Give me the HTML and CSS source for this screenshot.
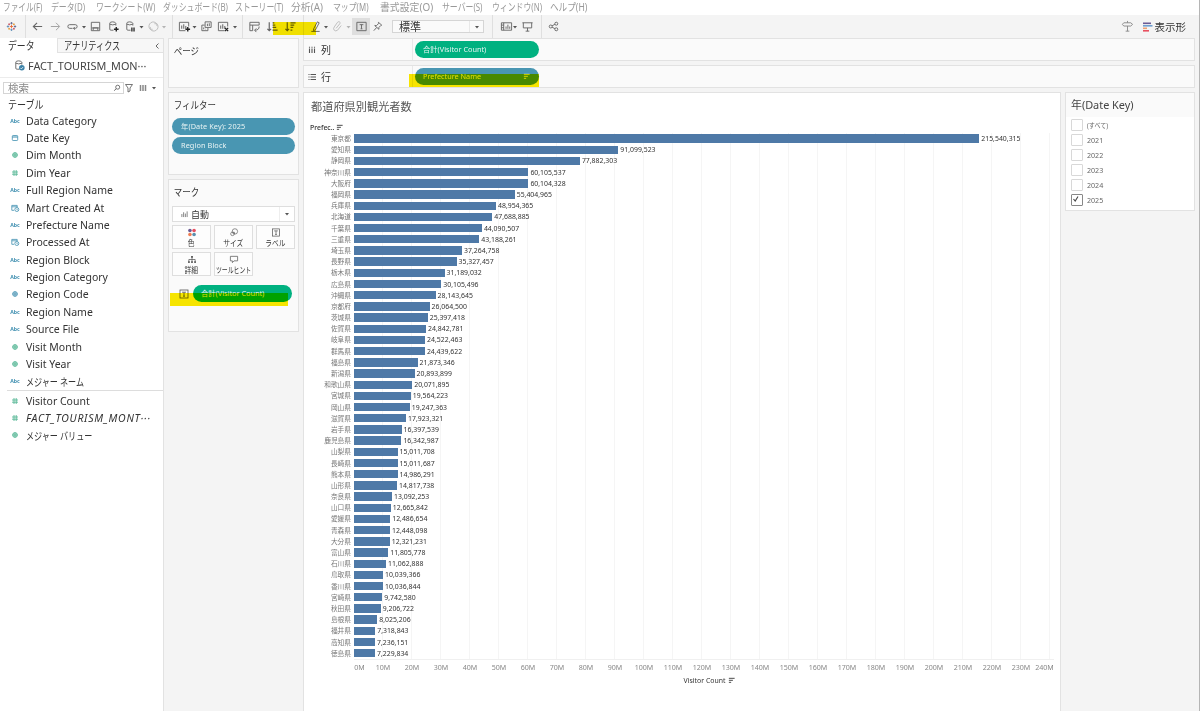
FILE: index.html
```html
<!DOCTYPE html>
<html lang="ja">
<head>
    <meta charset="UTF-8">
    <meta name="viewport" content="width=device-width, initial-scale=1.0">
    <title>都道府県別観光者数</title>
    <link rel="stylesheet" href="styles.css">
</head>
<body>

    <!-- Icons -->
    <svg class="defs">
        <symbol id="caret" viewBox="0 0 6 6"><path d="M1 2h4L3 4.4z" fill="#555"/></symbol>
        <symbol id="hash" viewBox="0 0 8 8"><path d="M3 1v6M5.2 1v6M1 3h6M1 5.2h6" stroke="currentColor" stroke-width=".8" fill="none"/></symbol>
        <symbol id="globe" viewBox="0 0 8 8"><circle cx="4" cy="4" r="2.4" fill="currentColor" fill-opacity=".4" stroke="currentColor" stroke-width=".7"/><path d="M4 1.400v5.200M1.400 4h5.200" stroke="currentColor" stroke-width=".6"/></symbol>
        <symbol id="date" viewBox="0 0 8 8"><rect x="1.3" y="1.5" width="5.4" height="5" rx=".8" fill="none" stroke="currentColor" stroke-width=".8"/><path d="M1.3 3h5.4" stroke="currentColor"/></symbol>
        <symbol id="datetime" viewBox="0 0 10 8"><path d="M4 6.3H1.8V1.4h5.4v2M1.8 2.8h5.4" fill="none" stroke="currentColor" stroke-width=".8"/><circle cx="6.8" cy="5.5" r="2" fill="none" stroke="currentColor" stroke-width=".8"/><path d="M6.8 4.5v1.2h1" stroke="currentColor" stroke-width=".6" fill="none"/></symbol>
        <symbol id="sort" viewBox="0 0 8 8"><path d="M1 1.5h6.6M1 3.8h4.6M1 6.1h2.6" stroke="currentColor" stroke-width="1" fill="none"/></symbol>
        <symbol id="label" viewBox="0 0 10 10"><rect x="1" y="1" width="8" height="8" fill="none" stroke="currentColor" stroke-width=".8"/><path d="M3 3.2h4M5 3.2v4M4 7.2h2" stroke="currentColor" stroke-width=".8"/></symbol>
        <symbol id="cylinder" viewBox="0 0 14 14"><path d="M7 11H4.5Q3 11 3 10V3.5Q3 2 6 2T9.500 3.500V6M3 4.500Q6 6 9.500 4.500" fill="none" stroke="#666"/></symbol>
        <symbol id="worksheet" viewBox="0 0 14 14"><path d="M8 11.5H1.500V2.500h10V7" fill="none" stroke="#666"/><path d="M4 9.500V6M6.200 9.500V4.500M8.400 9.500V6.500" stroke="#666" stroke-width="1.100"/></symbol>
    </svg>

    <!-- Menu bar -->
    <div class="menubar">
        <span class="m1">ファイル(F)</span>
        <span class="m2">データ(D)</span>
        <span class="m3">ワークシート(W)</span>
        <span class="m4">ダッシュボード(B)</span>
        <span class="m5">ストーリー(T)</span>
        <span class="m6">分析(A)</span>
        <span class="m7">マップ(M)</span>
        <span class="m8">書式設定(O)</span>
        <span class="m9">サーバー(S)</span>
        <span class="m10">ウィンドウ(N)</span>
        <span class="m11">ヘルプ(H)</span>
    </div>

    <!-- Toolbar -->
    <div class="toolbar">
        <span class="tool w23 logo"><svg viewBox="0 0 14 14"><g stroke-width="1.100"><path d="M7 5v4M5 7h4" stroke="#eb6532"/><path d="M7 1.300v3M5.500 2.800h3M11.500 5.500v3M10 7h3" stroke="#5a6591"/><path d="M7 9.700v3M5.500 11.200h3M2.500 5.500v3M1 7h3" stroke="#5c8db8"/><path d="M4 3v2.400M2.800 4.200h2.400M10 8.700v2.400M8.800 9.900h2.400" stroke="#c74a58"/><path d="M10 3v2.400M8.800 4.200h2.400M4 8.700v2.400M2.800 9.900h2.400" stroke="#e8962e"/></g></svg></span>
        <span class="sep w5"></span>
        <span class="tool w19"><svg viewBox="0 0 14 14"><path d="M12 7H3M6.500 3L2.500 7l4 4" stroke-width="1.200"/></svg></span>
        <span class="tool w16 faded"><svg viewBox="0 0 14 14"><path d="M2 7h9M7.500 3l4 4-4 4"/></svg></span>
        <span class="tool w18"><svg viewBox="0 0 14 14"><path d="M7 9H4Q2 9 2 7t2-2h6q2 0 2 2t-2 2H8M9.500 7.500L8 9l1.500 1.500"/></svg></span>
        <svg class="w6"><use href="#caret"/></svg>
        <span class="tool w17"><svg viewBox="0 0 14 14"><path d="M2.500 2.500h9v9h-9zM4.500 11V8.500h5V11M3 8.500h8"/></svg></span>
        <span class="tool w18"><svg viewBox="0 0 14 14"><use href="#cylinder"/><path d="M10 7.500v5M7.500 10h5" stroke="#222" stroke-width="1.500"/></svg></span>
        <span class="tool w16"><svg viewBox="0 0 14 14"><use href="#cylinder"/><path d="M8.500 8v4.500M10.800 8v4.500" stroke="#222" stroke-width="1.400"/></svg></span>
        <svg class="w7"><use href="#caret"/></svg>
        <span class="tool w16 faint"><svg viewBox="0 0 14 14"><path d="M3 9.500A4.600 4.600 0 0 1 10.500 4M11 4.500A4.600 4.600 0 0 1 3.500 10M3.500 7.500v2.500H6M10.700 6.500V4H8"/></svg></span>
        <svg class="w6 faint"><use href="#caret"/></svg>
        <span class="sep w10"></span>
        <span class="tool w14"><svg viewBox="0 0 14 14"><use href="#worksheet"/><path d="M10.500 7.500v5M8 10h5" stroke="#222" stroke-width="1.500"/></svg></span>
        <svg class="w7"><use href="#caret"/></svg>
        <span class="tool w17"><svg viewBox="0 0 14 14"><path d="M5.500 2h6.500v6H5.500zM5 5.500H2v6h6.500V8.500M8 6.500V4M10 6.500V3.500M4 10V8M6 10v-.5"/></svg></span>
        <span class="tool w17"><svg viewBox="0 0 14 14"><use href="#worksheet"/><path d="M8.500 8.500l3.500 3.500M12 8.500L8.500 12" stroke="#222" stroke-width="1.400"/></svg></span>
        <svg class="w6"><use href="#caret"/></svg>
        <span class="sep w8"></span>
        <span class="tool w16"><svg viewBox="0 0 14 14"><path d="M2 2.500h10v3H2zM2 5.500v6h3v-6M12 7q0 4-4.500 4M9 9l-2 2 2 2"/></svg></span>
        <span class="tool w20"><svg viewBox="0 0 14 14"><path d="M3.500 2.500v9M1.500 9.500l2 2 2-2M7 3h2M7 5.500h3M7 8h4M7 10.800h5.500" stroke-width="1.300"/></svg></span>
        <span class="tool w17"><svg viewBox="0 0 14 14"><path d="M3.500 2.500v9M1.500 9.500l2 2 2-2M7 3h5.500M7 5.500h4M7 8h3M7 10.800h2" stroke-width="1.300"/></svg></span>
        <span class="sep w8"></span>
        <span class="tool w16"><svg viewBox="0 0 14 14"><path d="M5 9.500L9 2l2 1-4 7.500-2.200 1zM2.500 12.300h9"/></svg></span>
        <svg class="w6"><use href="#caret"/></svg>
        <span class="tool w16 faint"><svg viewBox="0 0 14 14"><path d="M5.500 9l4-5q1-1.500-.5-2t-2 .5L3.500 7.500q-1.500 2 0 3.500t3.500 0l4-5"/></svg></span>
        <svg class="w7 faint"><use href="#caret"/></svg>
        <span class="tool w18 pressed"><svg viewBox="0 0 14 14"><path d="M2 2.500h10v9H2zM5 5h4M7 5v4.500M6 9.500h2"/></svg></span>
        <span class="tool w14"><svg viewBox="0 0 14 14"><path d="M8 2.500l3.500 3-1 .5-2 2v2L4 6h2l2-2zM6 8.200L3 11.500"/></svg></span>
        <div class="fit-select"><span>標準</span><i><svg class="w6"><use href="#caret"/></svg></i></div>
        <span class="sep w16"></span>
        <span class="tool w12"><svg viewBox="0 0 14 14"><path d="M1.500 3h11v8h-11zM4 3v8M1.500 5.500H4M1.500 8.300H4M6.500 9.500V7M8.500 9.500V5M10.500 9.500V7"/></svg></span>
        <svg class="w6"><use href="#caret"/></svg>
        <span class="tool w18"><svg viewBox="0 0 14 14"><path d="M1.500 3h11M2.500 3v5.500h9V3M7 8.500v3.500M5 12h4"/></svg></span>
        <span class="sep w10"></span>
        <span class="tool w15"><svg viewBox="0 0 14 14"><circle cx="4" cy="7" r="1.600"/><circle cx="10" cy="4" r="1.600"/><circle cx="10" cy="10" r="1.600"/><path d="M5.500 6.200l3-1.500M5.500 7.800l3 1.500"/></svg></span>
        <div class="show-me">
            <span class="tool w16"><svg viewBox="0 0 14 14"><path d="M3 3h7.500l2 1.700-2 1.800H3L1.500 4.700zM7 1v2M7 6.500V12M5 12h4" stroke="#888"/></svg></span>
            <svg class="show-icon" viewBox="0 0 10 10"><path d="M0 1.300h8" stroke="#6b5b95" stroke-width="1.600"/><path d="M0 3.800h9.500" stroke="#6f9fd0" stroke-width="1.600"/><path d="M0 6.300h4" stroke="#f0a070" stroke-width="1.600"/><path d="M0 8.800h6" stroke="#e85060" stroke-width="1.600"/></svg>
            <span class="show-label">表示形</span>
        </div>
        <div class="marker marker-tool"></div>
    </div>

    <div class="workspace">

        <!-- Data pane -->
        <div class="data-pane">
            <div class="tabs">
                <div class="tab active"><span>データ</span></div>
                <div class="tab"><span>アナリティクス</span><svg class="collapse" viewBox="0 0 6 8"><path d="M4.500 1.500L2 4l2.500 2.500" fill="none" stroke="#666"/></svg></div>
            </div>
            <div class="source">
                <svg viewBox="0 0 14 14"><use href="#cylinder"/><circle cx="9.500" cy="9.500" r="3" fill="#3c82a8"/><path d="M8 9.500l1 1.200 2-2.200" fill="none" stroke="#fff" stroke-width=".8"/></svg>
                <span>FACT_TOURISM_MON···</span>
            </div>
            <div class="search-row">
                <div class="search"><span>検索</span><svg viewBox="0 0 8 8"><circle cx="4.700" cy="3.200" r="2" fill="none" stroke="#666" stroke-width=".9"/><path d="M3.200 4.600L1.300 6.700" stroke="#666"/></svg></div>
                <svg class="funnel" viewBox="0 0 10 10"><path d="M1.500 1.500h7L6 5v3L4 9V5z" fill="none" stroke="#666" stroke-width=".9"/></svg>
                <svg class="view" viewBox="0 0 10 10"><path d="M2.500 2v6M5 2v6M7.500 2v6" stroke="#888" stroke-width="1.500"/></svg>
                <svg class="w6"><use href="#caret"/></svg>
            </div>
            <div class="tables-title"><span>テーブル</span></div>
            <div class="fields" id="dimensions"></div>
            <div class="fields measures" id="measures"></div>
        </div>

        <!-- Pages, filters and marks -->
        <div class="cards">
            <div class="card pages"><h3>ページ</h3></div>
            <div class="card filters">
                <h3>フィルター</h3>
                <div class="pill blue">年(Date Key): 2025</div>
                <div class="pill blue">Region Block</div>
            </div>
            <div class="card marks">
                <h3>マーク</h3>
                <div class="mark-type">
                    <svg class="bars" viewBox="0 0 8 8"><path d="M1 7.500V4M3 7.500V2M5 7.500V3.500M7 7.500V1" stroke="#666" stroke-width=".9"/></svg>
                    <span>自動</span>
                    <i><svg class="w6"><use href="#caret"/></svg></i>
                </div>
                <div class="mark-buttons">
                    <div class="mark-button"><svg viewBox="0 0 10 10"><circle cx="2.700" cy="2.700" r="2" fill="#6b5b95"/><circle cx="7.300" cy="2.700" r="2" fill="#e85060"/><circle cx="2.700" cy="7.300" r="2" fill="#f07c52"/><circle cx="7.300" cy="7.300" r="2" fill="#5a8fae"/></svg><span>色</span></div>
                    <div class="mark-button"><svg viewBox="0 0 10 10" fill="none" stroke="#666" stroke-width=".8"><circle cx="6" cy="3.800" r="3"/><circle cx="3.300" cy="6.500" r="2"/><path d="M3.500 4.800h2v2"/></svg><span>サイズ</span></div>
                    <div class="mark-button"><svg><use href="#label"/></svg><span>ラベル</span></div>
                    <div class="mark-button"><svg viewBox="0 0 10 10"><path d="M5 2v3M1.500 8V5h7v3M5 5v3" fill="none" stroke="#555" stroke-width=".8"/><path d="M4 1h2v2H4zM.7 7h1.800v1.800H.7zM4.100 7h1.800v1.800H4.100zM7.500 7h1.800v1.800H7.500z" fill="#555"/></svg><span>詳細</span></div>
                    <div class="mark-button tooltip"><svg viewBox="0 0 10 10"><path d="M1 1.500h8v5H5L3.200 8.500v-2H1z" fill="none" stroke="#666" stroke-width=".9"/></svg><span>ツールヒント</span></div>
                </div>
                <div class="mark-field">
                    <svg><use href="#label"/></svg>
                    <div class="pill green">合計(Visitor Count)</div>
                    <div class="marker marker-mark"></div>
                </div>
            </div>
        </div>

        <!-- Shelves and view -->
        <div class="main">
            <div class="shelf">
                <div class="shelf-name"><svg viewBox="0 0 8 8"><path d="M1.500 2.500V7M4 2.500V7M6.500 2.500V7M1.500 .7v1M4 .7v1M6.500 .7v1" stroke="#555" stroke-width="1.100"/></svg>列</div>
                <div class="pill green">合計(Visitor Count)</div>
            </div>
            <div class="shelf">
                <div class="shelf-name"><svg viewBox="0 0 8 8"><path d="M2.500 1.500H8M2.500 4H8M2.500 6.500H8M.5 1.500h1M.5 4h1M.5 6.500h1" stroke="#555" stroke-width="1.100"/></svg>行</div>
                <div class="pill blue">Prefecture Name<svg class="sort"><use href="#sort"/></svg></div>
                <div class="marker marker-row"></div>
            </div>
            <div class="view-area">
                <div class="sheet">
                    <h1>都道府県別観光者数</h1>
                    <div class="row-header">Prefec.. <svg class="sort"><use href="#sort"/></svg></div>
                    <div class="chart" id="bar-chart"></div>
                    <div class="axis" id="axis"></div>
                    <div class="axis-title">Visitor Count <svg class="sort"><use href="#sort"/></svg></div>
                </div>
                <div class="year-filter">
                    <h2>年(Date Key)</h2>
                    <ul>
                        <li><i></i><span class="all">(すべて)</span></li>
                        <li><i></i><span>2021</span></li>
                        <li><i></i><span>2022</span></li>
                        <li><i></i><span>2023</span></li>
                        <li><i></i><span>2024</span></li>
                        <li><i class="on"><svg viewBox="0 0 8 8"><path d="M1.500 4l1.700 2L6 1.500" fill="none" stroke="#444" stroke-width="1.100"/></svg></i><span>2025</span></li>
                    </ul>
                </div>
            </div>
        </div>
    </div>

    <script src="script.js"></script>
</body>
</html>
```
FILE: styles.css
```css
* {
    box-sizing: border-box;
}

body {
    margin: 0;
    height: 711px;
    overflow: hidden;
    display: flex;
    flex-direction: column;
    background: #f4f4f4;
    color: #333;
    font-family: "Noto Sans", "Noto Sans CJK JP", sans-serif;
    font-size: 11px;
    border-right: 1px solid #b5b5b5;
}

h1, h2, h3, ul {
    margin: 0;
    padding: 0;
    font-weight: normal;
}

svg {
    display: block;
    flex: none;
}

.defs {
    position: absolute;
    width: 0;
    height: 0;
}

/* Menu bar */
.menubar {
    display: flex;
    flex: none;
    height: 15px;
    padding-left: 3px;
    background: #fff;
    color: #999;
    font-size: 10.5px;
    line-height: 15px;
    white-space: nowrap;
}

.menubar span {
    flex: none;
    transform: scaleX(.75);
    transform-origin: left;
}

.m1 { width: 48px; }
.m2 { width: 45px; }
.m3 { width: 67px; }
.m4 { width: 72px; }
.m5 { width: 56px; }
.m6 { width: 42px; }
.m7 { width: 47px; }
.m8 { width: 62px; }
.m9 { width: 50px; }
.m10 { width: 58px; }
.m11 { width: 40px; }

.menubar .m1 { transform: scaleX(.73); }
.menubar .m6 { transform: scaleX(.94); }
.menubar .m8 { transform: scaleX(.94); }
.menubar .m11 { transform: scaleX(.82); }

/* Toolbar */
.toolbar {
    position: relative;
    display: flex;
    flex: none;
    align-items: center;
    height: 23px;
}

.tool {
    display: flex;
    flex: none;
    justify-content: center;
    align-items: center;
    height: 17px;
    color: #666;
}

.tool svg {
    width: 13px;
    height: 13px;
    fill: none;
    stroke: #666;
}

.tool.logo svg {
    width: 11px;
    height: 11px;
}

.faded { opacity: .6; }
.faint { opacity: .4; }

.pressed {
    background: #dedede;
}

.sep {
    flex: none;
    height: 23px;
    background: linear-gradient(#dfdfdf, #dfdfdf) center / 1px 100% no-repeat;
}

svg.w6, svg.w7 {
    height: 6px;
}

.w5 { width: 5px; }
.w6 { width: 6px; }
.w7 { width: 7px; }
.w8 { width: 8px; }
.w10 { width: 10px; }
.w12 { width: 12px; }
.w14 { width: 14px; }
.w15 { width: 15px; }
.w16 { width: 16px; }
.w17 { width: 17px; }
.w18 { width: 18px; }
.w19 { width: 19px; }
.w20 { width: 20px; }
.w23 { width: 23px; }

.fit-select {
    display: flex;
    align-items: center;
    justify-content: space-between;
    width: 92px;
    height: 13px;
    margin-left: 8px;
    padding-left: 6px;
    border: 1px solid #d5d5d5;
    background: #fafafa;
    line-height: 11px;
}

.fit-select i {
    display: flex;
    align-items: center;
    height: 11px;
    padding: 0 3px 0 4px;
    border-left: 1px solid #e8e8e8;
}

.show-me {
    display: flex;
    align-items: center;
    margin-left: auto;
    margin-right: 13px;
}

.show-icon {
    width: 10px;
    height: 10px;
    margin-left: 7px;
}

.show-label {
    margin-left: 2px;
    font-size: 10.5px;
    line-height: 16px;
}

/* Highlighter strokes */
.marker {
    position: absolute;
    background: #fbe900;
    mix-blend-mode: multiply;
}

.marker-tool {
    left: 273px;
    top: 7px;
    width: 43px;
    height: 13px;
}

.marker-row {
    left: 105px;
    top: 8px;
    width: 130px;
    height: 13px;
}

.marker-mark {
    left: 0;
    top: 8px;
    width: 118px;
    height: 13px;
}

.workspace {
    display: flex;
    flex: 1;
    min-height: 0;
}

/* Data pane */
.data-pane {
    flex: none;
    width: 164px;
    margin-right: 4px;
    background: #fff;
    border-right: 1px solid #e2e2e2;
}

.tabs {
    display: flex;
    height: 15px;
    line-height: 15px;
    font-size: 11.5px;
}

.tab {
    display: flex;
    flex: 1;
    align-items: center;
    padding-left: 6px;
    background: #f7f7f7;
    border: 1px solid #e2e2e2;
    border-right: 0;
}

.tab span {
    flex: none;
    width: 87px;
    transform: scaleX(.71);
    transform-origin: left;
    white-space: nowrap;
}

.tab.active {
    flex: none;
    width: 57px;
    padding-left: 8px;
    background: #fff;
    border: 0;
}

.tab.active span {
    width: 40px;
    transform: scaleX(.77);
}

.collapse {
    width: 6px;
    height: 8px;
    margin-left: 3px;
}

.source {
    display: flex;
    align-items: center;
    height: 25px;
    padding-left: 13px;
    border-bottom: 1px solid #ececec;
    color: #444;
    font-size: 10.85px;
    white-space: nowrap;
}

.source svg {
    width: 13px;
    height: 13px;
    margin-right: 2px;
}

.search-row {
    display: flex;
    align-items: center;
    height: 20px;
    padding-left: 3px;
}

.search {
    display: flex;
    align-items: center;
    justify-content: space-between;
    width: 121px;
    height: 12px;
    padding: 0 2px 0 4px;
    border: 1px solid #d5d5d5;
    color: #888;
    font-size: 10.5px;
    line-height: 10px;
}

.search svg {
    width: 8px;
    height: 8px;
}

.funnel {
    width: 10px;
    height: 10px;
    margin-right: 4px;
}

.view {
    width: 10px;
    height: 10px;
    margin-right: 3px;
}

.tables-title {
    height: 14px;
    padding-left: 8px;
    line-height: 13px;
}

.tables-title span {
    display: inline-block;
    transform: scaleX(.82);
    transform-origin: left;
}

.field {
    display: flex;
    align-items: center;
    height: 17.38px;
    padding-left: 10px;
    color: #333;
    font-size: 10.5px;
    white-space: nowrap;
}

.field svg {
    width: 10px;
    height: 8px;
    margin-right: 6px;
    color: #3f8fb0;
}

.field svg.green-icon {
    color: #45b08c;
}

.field .abc {
    width: 10px;
    margin-right: 6px;
    color: #3f8fb0;
    font-size: 5.2px;
    text-align: center;
    font-weight: bold;
}

.field .kana {
    transform: scaleX(.77);
    transform-origin: left;
}

.field .italic {
    font-style: italic;
    letter-spacing: .7px;
}

.measures {
    margin-left: 7px;
    padding-top: 1px;
    border-top: 1px solid #ddd;
}

.measures .field {
    padding-left: 3px;
}

/* Cards */
.cards {
    flex: none;
    width: 131px;
}

.card {
    border: 1px solid #e2e2e2;
    background: #fafafa;
    margin-bottom: 4px;
    padding: 0 3px;
}

.card h3 {
    height: 25px;
    padding-left: 2px;
    font-size: 10px;
    line-height: 24px;
    transform: scaleX(.85);
    transform-origin: left;
}

.pages { height: 50px; }
.filters { height: 83px; }
.marks { height: 153px; }

.pill {
    display: flex;
    align-items: center;
    height: 17px;
    padding: 0 9px 1px;
    border-radius: 9px;
    color: #e8f4f4;
    font-size: 7.3px;
    white-space: nowrap;
}

.pill.blue {
    background: #4996b2;
}

.pill.green {
    background: #00b180;
}

.filters .pill {
    margin-bottom: 2px;
    letter-spacing: .1px;
}

.mark-type {
    display: flex;
    align-items: center;
    height: 16px;
    margin-top: 1px;
    padding-left: 8px;
    border: 1px solid #dedede;
    background: #fff;
    font-size: 9px;
}

.mark-type .bars {
    width: 7px;
    height: 8px;
    margin-right: 3px;
}

.mark-type i {
    display: flex;
    align-items: center;
    height: 14px;
    margin-left: auto;
    padding: 0 4px;
    border-left: 1px solid #eee;
}

.mark-buttons {
    display: flex;
    flex-wrap: wrap;
    gap: 3px;
    margin-top: 3px;
}

.mark-button {
    display: flex;
    flex-direction: column;
    align-items: center;
    width: 39px;
    height: 24px;
    padding-top: 2px;
    border: 1px solid #dedede;
    background: #fdfdfd;
    font-size: 8.2px;
    line-height: 12px;
    white-space: nowrap;
}

.mark-button svg {
    width: 10px;
    height: 9px;
    color: #555;
}

.mark-button span {
    transform: scaleX(.82);
}

.mark-button.tooltip span {
    transform: scaleX(.72);
}

.mark-field {
    position: relative;
    display: flex;
    align-items: center;
    gap: 4px;
    margin-top: 9px;
    margin-left: -2px;
    padding-left: 9px;
}

.mark-field > svg {
    width: 10px;
    height: 10px;
    color: #555;
}

.mark-field .pill {
    width: 99px;
    padding-left: 8px;
}

/* Shelves */
.main {
    display: flex;
    flex: none;
    flex-direction: column;
    width: 892px;
    margin-left: 4px;
}

.shelf {
    position: relative;
    display: flex;
    flex: none;
    align-items: center;
    height: 23px;
    margin-bottom: 4px;
    border: 1px solid #e2e2e2;
    background: #fafafa;
}

.shelf-name {
    display: flex;
    align-items: center;
    width: 109px;
    height: 21px;
    margin-right: 2px;
    padding-left: 4px;
    border-right: 1px solid #e8e8e8;
    font-size: 10px;
}

.shelf-name svg {
    width: 8px;
    height: 8px;
    margin-right: 5px;
}

.shelf .pill {
    width: 124px;
    padding-left: 8px;
}

.sort {
    width: 7px;
    height: 7px;
}

.pill .sort {
    margin-left: auto;
}

/* View */
.view-area {
    display: flex;
    flex: 1;
    align-items: flex-start;
    gap: 4px;
}

.sheet {
    width: 758px;
    height: 620px;
    background: #fff;
    border: 1px solid #e2e2e2;
    border-bottom: 0;
}

.sheet h1 {
    height: 29px;
    padding-left: 7px;
    color: #555;
    font-size: 11.2px;
    line-height: 28px;
}

.row-header {
    display: flex;
    align-items: center;
    gap: 1.5px;
    height: 11px;
    padding-left: 6px;
    font-size: 6.9px;
    font-weight: 500;
}

.chart {
    display: flex;
    flex-direction: column;
    height: 526.4px;
    margin-left: 6px;
}

.row {
    display: flex;
    align-items: center;
    height: 11.2px;
    font-size: 6.9px;
    line-height: 11px;
    white-space: nowrap;
}

.row .name {
    width: 41px;
    margin-right: 3px;
    color: #777;
    font-size: 6.7px;
    text-align: right;
}

.plot {
    display: flex;
    align-items: center;
    width: 700px;
    height: 100%;
    background: repeating-linear-gradient(to right, transparent 0 28.01px, #f5f5f5 28.01px 29.01px);
}

.bar {
    height: 8.4px;
    margin-right: 2px;
    background: #4e79a7;
}

.axis {
    display: flex;
    height: 15px;
    margin-left: 50px;
    width: 700px;
    border-top: 1px solid #f0f0f0;
}

.axis span {
    flex: none;
    width: 29.01px;
    margin-left: -14.5px;
    margin-right: 14.5px;
    color: #888;
    font-size: 7.1px;
    line-height: 15px;
    text-align: center;
}

.axis span:first-child {
    margin-left: -9px;
    margin-right: 9px;
}

.axis span:last-child {
    margin-left: -20px;
}

.axis-title {
    display: flex;
    align-items: center;
    justify-content: center;
    gap: 3px;
    height: 13px;
    padding-left: 55px;
    font-size: 6.9px;
}

/* Year filter */
.year-filter {
    width: 130px;
    height: 119px;
    border: 1px solid #e2e2e2;
    background: #fff;
}

.year-filter h2 {
    height: 24px;
    padding-left: 5px;
    background: #fafafa;
    color: #444;
    font-size: 10.9px;
    line-height: 24px;
}

.year-filter ul {
    list-style: none;
    padding: 0 0 0 5px;
}

.year-filter li {
    display: flex;
    align-items: center;
    height: 15.1px;
    color: #666;
    font-size: 7.1px;
}

.year-filter i {
    width: 12px;
    height: 12px;
    margin-right: 4px;
    border: 1px solid #d8d8d8;
    border-radius: 1px;
}

.year-filter i.on {
    border-color: #888;
}

.year-filter i svg {
    width: 8px;
    height: 8px;
}

.year-filter .all {
    transform: scaleX(.85);
    transform-origin: left;
}
```
FILE: script.js
```js
const dimensions = [
    ["abc", "Data Category"], ["date", "Date Key"], ["globe", "Dim Month", "green"],
    ["hash", "Dim Year", "green"], ["abc", "Full Region Name"], ["datetime", "Mart Created At"],
    ["abc", "Prefecture Name"], ["datetime", "Processed At"], ["abc", "Region Block"],
    ["abc", "Region Category"], ["globe", "Region Code"], ["abc", "Region Name"],
    ["abc", "Source File"], ["globe", "Visit Month", "green"], ["globe", "Visit Year", "green"],
    ["abc", "メジャー ネーム", "", "kana"]
];

const measures = [
    ["hash", "Visitor Count", "green"],
    ["hash", "FACT_TOURISM_MONT···", "green", "italic"],
    ["globe", "メジャー バリュー", "green", "kana"]
];

const visitors = [
    ["東京都", 215540315], ["愛知県", 91099523], ["静岡県", 77882303], ["神奈川県", 60105537],
    ["大阪府", 60104328], ["福岡県", 55404965], ["兵庫県", 48954365], ["北海道", 47688885],
    ["千葉県", 44090507], ["三重県", 43188261], ["埼玉県", 37264758], ["長野県", 35327457],
    ["栃木県", 31189032], ["広島県", 30105496], ["沖縄県", 28143645], ["京都府", 26064500],
    ["茨城県", 25397418], ["佐賀県", 24842781], ["岐阜県", 24522463], ["群馬県", 24439622],
    ["福島県", 21873346], ["新潟県", 20893899], ["和歌山県", 20071895], ["宮城県", 19564223],
    ["岡山県", 19247363], ["滋賀県", 17923321], ["岩手県", 16397539], ["鹿児島県", 16342987],
    ["山梨県", 15011708], ["長崎県", 15011687], ["熊本県", 14986291], ["山形県", 14817738],
    ["奈良県", 13092253], ["山口県", 12665842], ["愛媛県", 12486654], ["青森県", 12448098],
    ["大分県", 12321231], ["富山県", 11805778], ["石川県", 11062888], ["鳥取県", 10039366],
    ["香川県", 10036844], ["宮崎県", 9742580], ["秋田県", 9206722], ["島根県", 8025206],
    ["福井県", 7318843], ["高知県", 7236151], ["徳島県", 7229834]
];

const PX_PER_MILLION = 2.901;

function fieldHtml([icon, name, color, style]) {
    const mark = icon === "abc"
        ? `<span class="abc">Abc</span>`
        : `<svg class="${color ? "green-icon" : ""}"><use href="#${icon}"/></svg>`;
    return `<div class="field">${mark}<span class="${style || ""}">${name}</span></div>`;
}

document.getElementById("dimensions").innerHTML = dimensions.map(fieldHtml).join("");
document.getElementById("measures").innerHTML = measures.map(fieldHtml).join("");

document.getElementById("bar-chart").innerHTML = visitors.map(([name, count]) => {
    const width = (count / 1e6 * PX_PER_MILLION).toFixed(1);
    return `<div class="row"><span class="name">${name}</span><div class="plot"><div class="bar" style="width: ${width}px"></div>${count.toLocaleString("en-US")}</div></div>`;
}).join("");

let ticks = "";
for (let m = 0; m <= 240; m += 10) {
    ticks += `<span>${m}M</span>`;
}
document.getElementById("axis").innerHTML = ticks;
```
